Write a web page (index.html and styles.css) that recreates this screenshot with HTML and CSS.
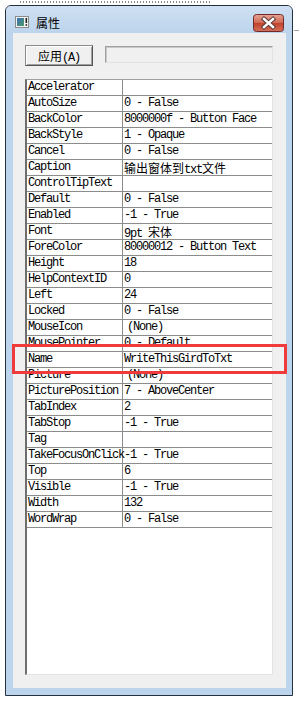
FILE: index.html
```html
<!DOCTYPE html>
<html lang="zh-CN">
<head>
    <meta charset="UTF-8">
    <title>属性</title>
    <link rel="stylesheet" href="styles.css">
</head>
<body>
    <div class="dots"></div>
    <div class="edge-line"></div>

    <div class="window">
        <div class="titlebar">
            <svg class="app-icon" width="14" height="12" viewBox="0 0 14 12">
                <defs>
                    <linearGradient id="ig" x1="0" y1="0" x2="1" y2="1">
                        <stop offset="0" stop-color="#3b6fb6"/>
                        <stop offset="1" stop-color="#4d9a66"/>
                    </linearGradient>
                </defs>
                <rect x="0.5" y="0.5" width="13" height="11" fill="#f4f4f4" stroke="#8a8a8a"/>
                <rect x="2" y="2" width="7" height="8" fill="url(#ig)"/>
                <rect x="10.5" y="2" width="1.6" height="5" fill="#222"/>
                <rect x="10.5" y="8.2" width="1.6" height="1.6" fill="#222"/>
            </svg>
            <span class="title">属性</span>
            <svg class="close-btn" width="31" height="18" viewBox="0 0 31 18">
                <defs>
                    <linearGradient id="cg" x1="0" y1="0" x2="0" y2="1">
                        <stop offset="0" stop-color="#e8a494"/>
                        <stop offset="0.48" stop-color="#d06a55"/>
                        <stop offset="0.52" stop-color="#c0432c"/>
                        <stop offset="1" stop-color="#d7705a"/>
                    </linearGradient>
                </defs>
                <rect x="0.5" y="0.5" width="30" height="17" rx="3" fill="url(#cg)" stroke="#6e2a2a"/>
                <path d="M11 5 L20 13 M20 5 L11 13" stroke="#5a3a3a" stroke-width="4.4" stroke-linecap="square"/>
                <path d="M11 5 L20 13 M20 5 L11 13" stroke="#ffffff" stroke-width="2.4" stroke-linecap="square"/>
            </svg>
        </div>

        <div class="client">
            <div class="toolbar">
                <div class="apply-btn"><span class="cjk">应用</span>(A)</div>
                <div class="status-field"></div>
            </div>

            <div class="grid">
                <div class="row"><div class="k">Accelerator</div><div class="v"></div></div>
                <div class="row"><div class="k">AutoSize</div><div class="v">0 - False</div></div>
                <div class="row"><div class="k">BackColor</div><div class="v">8000000f - Button Face</div></div>
                <div class="row"><div class="k">BackStyle</div><div class="v">1 - Opaque</div></div>
                <div class="row"><div class="k">Cancel</div><div class="v">0 - False</div></div>
                <div class="row"><div class="k">Caption</div><div class="v"><span class="cjk">输出窗体到</span>txt<span class="cjk">文件</span></div></div>
                <div class="row"><div class="k">ControlTipText</div><div class="v"></div></div>
                <div class="row"><div class="k">Default</div><div class="v">0 - False</div></div>
                <div class="row"><div class="k">Enabled</div><div class="v">-1 - True</div></div>
                <div class="row"><div class="k">Font</div><div class="v">9pt <span class="cjk">宋体</span></div></div>
                <div class="row"><div class="k">ForeColor</div><div class="v">80000012 - Button Text</div></div>
                <div class="row"><div class="k">Height</div><div class="v">18</div></div>
                <div class="row"><div class="k">HelpContextID</div><div class="v">0</div></div>
                <div class="row"><div class="k">Left</div><div class="v">24</div></div>
                <div class="row"><div class="k">Locked</div><div class="v">0 - False</div></div>
                <div class="row"><div class="k">MouseIcon</div><div class="v shifted">(None)</div></div>
                <div class="row"><div class="k">MousePointer</div><div class="v">0 - Default</div></div>
                <div class="row"><div class="k">Name</div><div class="v">WriteThisGirdToTxt</div></div>
                <div class="row"><div class="k">Picture</div><div class="v shifted">(None)</div></div>
                <div class="row"><div class="k">PicturePosition</div><div class="v">7 - AboveCenter</div></div>
                <div class="row"><div class="k">TabIndex</div><div class="v">2</div></div>
                <div class="row"><div class="k">TabStop</div><div class="v">-1 - True</div></div>
                <div class="row"><div class="k">Tag</div><div class="v"></div></div>
                <div class="row"><div class="k">TakeFocusOnClick</div><div class="v">-1 - True</div></div>
                <div class="row"><div class="k">Top</div><div class="v">6</div></div>
                <div class="row"><div class="k">Visible</div><div class="v">-1 - True</div></div>
                <div class="row"><div class="k">Width</div><div class="v">132</div></div>
                <div class="row"><div class="k">WordWrap</div><div class="v">0 - False</div></div>
            </div>
        </div>
    </div>

    <!-- annotation box drawn over the Name row -->
    <div class="highlight"></div>
</body>
</html>
```

FILE: styles.css
```css
body {
    margin: 0;
    width: 299px;
    height: 707px;
    position: relative;
    overflow: hidden;
    background-color: #fff;
    font-family: "Liberation Mono", monospace;
    color: #000;
}
.cjk {
    font-family: "Noto Sans CJK SC", sans-serif;
    letter-spacing: 0;
}

/* design-surface marks behind the window */
.dots {
    position: absolute;
    left: 20px;
    top: 1px;
    width: 192px;
    height: 2px;
    background: repeating-linear-gradient(90deg, #8a8a8a 0 1px, transparent 1px 3px);
}
.edge-line {
    position: absolute;
    left: 294px;
    top: 30px;
    width: 5px;
    height: 1px;
    background-color: #a0a0a0;
}

.window {
    margin: 5px 0 0 5px;
    width: 288px;
    height: 691px;
    box-sizing: border-box;
    border: 1px solid #233140;
    border-radius: 6px 6px 0 0;
    background-color: #bcd4ec;
    display: flex;
    flex-direction: column;
}
.titlebar {
    height: 27px;
    box-sizing: border-box;
    padding: 5px 8px 0 9px;
    display: flex;
    align-items: center;
    background: linear-gradient(#cfe0f2, #bcd4ec);
    border-radius: 5px 5px 0 0;
}
.app-icon {
    margin-right: 7px;
}
.title {
    font-family: "Noto Sans CJK SC", sans-serif;
    font-size: 12px;
    color: #000;
}
.close-btn {
    margin-left: auto;
    align-self: flex-start;
    margin-top: 3px;
}

.client {
    flex: 1;
    margin: 0 6px 7px 7px;
    background-color: #f0f0f0;
    padding: 12px 13px 13px 12px;
    display: flex;
    flex-direction: column;
}
.toolbar {
    display: flex;
    align-items: flex-start;
    gap: 12px;
}
.apply-btn {
    width: 68px;
    height: 21px;
    box-sizing: border-box;
    border: 1px solid #8a8a8a;
    border-right-color: #555;
    border-bottom-color: #555;
    box-shadow: inset 1px 1px #fff, inset -1px -1px #a0a0a0;
    background-color: #f0f0f0;
    font-size: 12px;
    letter-spacing: -1.2px;
    line-height: 19px;
    text-align: center;
}
.status-field {
    width: 168px;
    height: 17px;
    margin-top: 1px;
    box-sizing: border-box;
    border: 1px solid #a0a0a0;
    border-right-color: #e3e3e3;
    border-bottom-color: #e3e3e3;
    box-shadow: inset 1px 1px #c8c8c8;
    background-color: #f0f0f0;
}

.grid {
    margin-top: 13px;
    flex: 1;
    background-color: #fff;
    border-top: 1px solid #a0a0a0;
    border-left: 2px solid #6e6e6e;
    border-right: 1px solid #e3e3e3;
    border-bottom: 1px solid #e3e3e3;
}
.row {
    display: flex;
    height: 16px;
    box-sizing: border-box;
    border-bottom: 1px solid #8c8c8c;
    font-size: 12px;
    line-height: 15px;
    letter-spacing: -1.2px;
    white-space: nowrap;
}
.k {
    width: 96px;
    flex: none;
    padding-left: 1px;
    box-sizing: border-box;
    border-right: 1px solid #8c8c8c;
    overflow: visible;
}
.v {
    flex: 1;
    padding-left: 1px;
}
.v.shifted {
    padding-left: 4px;
}

.highlight {
    position: absolute;
    left: 12px;
    top: 344px;
    width: 275px;
    height: 30px;
    box-sizing: border-box;
    border: 3px solid #ef3b3b;
}
```
